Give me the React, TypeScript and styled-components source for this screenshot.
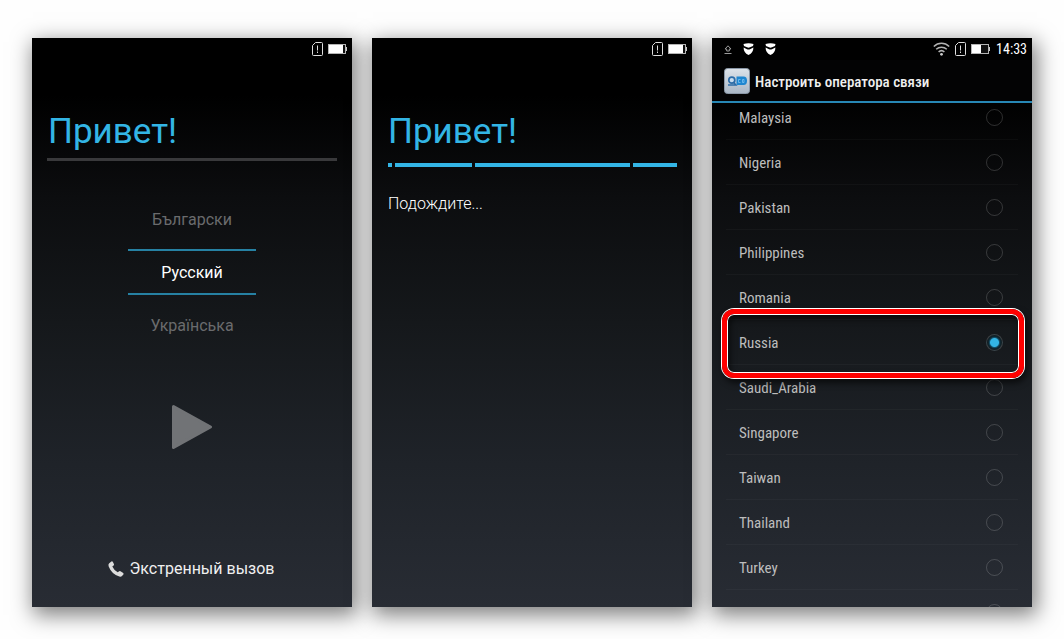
import React from "react";
import styled, { createGlobalStyle } from "styled-components";

const GlobalStyle = createGlobalStyle`
  *, *::before, *::after { box-sizing: border-box; }
  body { margin: 0; background: #fefefe; font-family: Roboto, "Liberation Sans", sans-serif; }
  button { font: inherit; color: inherit; background: none; border: 0; padding: 0; cursor: pointer; }
`;

const Page = styled.main`
  display: grid;
  grid-template-columns: repeat(3, minmax(0, 1fr));
  gap: 20px;
  padding: 38px 32px 32px;
  overflow: hidden;
`;

const Phone = styled.section`
  display: flex;
  flex-direction: column;
  aspect-ratio: 320 / 569;
  min-height: 0;
  overflow: hidden;
  color: #fff;
  background: linear-gradient(#000 0%, #000 10%, #0c0d0f 28%, #15181b 50%, #1f2329 75%, #282c34 100%);
  box-shadow: 3px 6px 20px 2px rgba(0, 0, 0, 0.5);
`;

const StatusBar = styled.header`
  display: flex;
  flex: none;
  align-items: center;
  justify-content: space-between;
  height: 22px;
  padding: 0 5px 0 12px;
  background: #000;
`;

const StatusGroup = styled.div<{ $gap: number }>`
  display: flex;
  align-items: center;
  gap: ${(p) => p.$gap}px;
  svg { display: block; }
`;

const Clock = styled.time`
  padding-left: 1px;
  font: 400 14px/22px "Roboto Condensed", "Liberation Sans Narrow", Roboto, sans-serif;
`;

const Setup = styled.div`
  display: flex;
  flex: 1;
  flex-direction: column;
  padding: 50px 15px 20px;
`;

const Greeting = styled.h1`
  margin: 0;
  padding-left: 1px;
  font-size: 35px;
  font-weight: 400;
  line-height: 44px;
  color: #33b5e5;
`;

const Rule = styled.div`
  height: 3px;
  margin-top: 4px;
  background: #39393b;
`;

const Progress = styled.div`
  display: grid;
  grid-template-columns: 4fr 77fr 155fr 44fr;
  gap: 3px;
  margin-top: 9px;
  padding-left: 1px;
  span { height: 4px; background: #33b5e5; }
`;

const Note = styled.p`
  margin: 27px 0 0;
  padding-left: 1px;
  font-size: 16px;
  font-weight: 300;
  line-height: 20px;
`;

const Wheel = styled.div`
  display: flex;
  flex-direction: column;
  align-items: center;
  gap: 10px;
  margin-top: 38px;
`;

const Language = styled.button<{ $selected?: boolean }>`
  width: 128px;
  height: ${(p) => (p.$selected ? 46 : 40)}px;
  padding-top: 2px;
  font-size: 16px;
  line-height: 20px;
  color: ${(p) => (p.$selected ? "#fff" : "#6a6b6d")};
  ${(p) => p.$selected && "border-top: 2px solid #2681a3; border-bottom: 2px solid #2681a3;"}
`;

const Play = styled.button`
  align-self: center;
  margin-top: 60px;
  svg { display: block; }
`;

const Emergency = styled.button`
  display: flex;
  align-items: center;
  align-self: center;
  gap: 6px;
  margin-top: auto;
  padding-right: 2px;
  font-size: 16px;
  line-height: 36px;
  color: #f0f0f0;
`;

const TitleBar = styled.div`
  display: flex;
  position: relative;
  z-index: 1;
  flex: none;
  align-items: center;
  gap: 5px;
  height: 43px;
  padding: 0 12px;
  border-bottom: 2px solid #2787b4;
  background: #030304;
  svg { display: block; flex: none; }
`;

const Title = styled.h2`
  margin: 0;
  padding-top: 2px;
  font: 500 15px/20px "Roboto Condensed", "Liberation Sans Narrow", Roboto, sans-serif;
  color: #f0f0f0;
  white-space: nowrap;
`;

const Countries = styled.ul`
  flex: 1;
  min-height: 0;
  margin: -8px 0 0;
  padding: 0 14px;
  list-style: none;
`;

const Country = styled.li`
  position: relative;
  border-bottom: 1px solid rgba(255, 255, 255, 0.03);
`;

const CountryLabel = styled.label`
  display: flex;
  align-items: center;
  justify-content: space-between;
  height: 44px;
  padding: 0 15px 0 13px;
  font: 400 15px/20px "Roboto Condensed", "Liberation Sans Narrow", Roboto, sans-serif;
  color: #bdbdbd;
  span { padding-top: 2px; }
`;

const Radio = styled.input`
  appearance: none;
  width: 17px;
  height: 17px;
  margin: 0;
  border: 1px solid rgba(255, 255, 255, 0.17);
  border-radius: 50%;
  &:checked {
    background: radial-gradient(circle, #33b5e5 0 4px, #145069 5px, #0e2630 6px, #15191c 8px);
  }
`;

const Highlight = styled.div`
  position: absolute;
  z-index: 1;
  inset: -11px -6px -14px -4px;
  border: 5px solid #fe0000;
  border-radius: 12px;
  box-shadow: 0 0 0 1px #fff, inset 0 0 0 1px #fff, 2px 4px 6px 1px rgba(0, 0, 0, 0.6),
    inset 2px 4px 6px 1px rgba(0, 0, 0, 0.6);
  pointer-events: none;
`;

const SimIcon = () => (
  <svg width="11" height="14" viewBox="0 0 11 14" fill="none" stroke="#ddd" aria-hidden="true">
    <path d="M3.500 .5h6a1 1 0 0 1 1 1v11a1 1 0 0 1-1 1h-8a1 1 0 0 1-1-1v-9z" />
    <path d="M5.500 3.500v5M5.500 9.500v1.500" />
  </svg>
);

const BatteryIcon = ({ level }: { level: number }) => (
  <svg width="19" height="10" viewBox="0 0 19 10" aria-hidden="true">
    <rect x=".5" y=".5" width="17" height="9" fill="#111" stroke="#b4b4b4" />
    <rect x="1" y="1" width={level} height="8" fill="#fff" />
    <path d="M18 3h1v4h-1z" fill="#ccc" />
  </svg>
);

const WifiIcon = () => (
  <svg width="17" height="14" viewBox="0 0 17 14" fill="none" stroke="#b4b4b4" strokeWidth="1.5" aria-hidden="true">
    <path d="M.8 4.500C5.200.2 11.800.2 16.200 4.500M3.200 7.300c3-2.800 7.600-2.800 10.600 0M5.600 9.900c1.700-1.500 4.100-1.500 5.800 0" />
    <circle cx="8.500" cy="12.300" r="1.400" fill="#ccc" stroke="none" />
  </svg>
);

const UploadIcon = () => (
  <svg width="8" height="9" viewBox="0 0 8 9" fill="none" stroke="#9a9a9a" aria-hidden="true">
    <path d="M4 .8 1 4h1.700v2h2.600V4H7zM.5 8.500h7" />
  </svg>
);

const MaskIcon = () => (
  <svg width="11" height="12" viewBox="0 0 11 12" aria-hidden="true">
    <path d="M.5 1Q5.500-.5 10.500 1L10 3 7 4.300Q5.500 5 4 4.300L1 3z" fill="#fff" />
    <path d="M.6 4.400 4 6.200Q5.500 6.900 7 6.200L10.400 4.400Q10.500 9.500 5.500 12 .5 9.500 .6 4.400z" fill="#fff" />
  </svg>
);

const AppIcon = () => (
  <svg width="26" height="26" viewBox="0 0 26 26" aria-hidden="true">
    <defs>
      <linearGradient id="tile" x2="0" y2="1">
        <stop stopColor="#dde3ea" />
        <stop offset="1" stopColor="#a9b6c5" />
      </linearGradient>
    </defs>
    <rect x=".5" y=".5" width="25" height="25" rx="3" fill="url(#tile)" stroke="#8b98a8" />
    <path d="M12.500 8.500h7a3.500 4.200 0 0 1 0 8.500h-7z" fill="#1f86d0" />
    <circle cx="7.800" cy="12.200" r="3" fill="#c7dcef" stroke="#2c6ca8" strokeWidth="1.700" />
    <path d="M4 17h8L9.300 14" fill="none" stroke="#2c6ca8" strokeWidth="1.400" />
    <path d="M14.500 11.500v3M14.500 11.500h2M14.500 14.500h2M18.500 11.500h1.500v3h-1.500z" fill="none" stroke="#7cc3f2" strokeWidth=".8" />
  </svg>
);

const PlayIcon = () => (
  <svg width="42" height="44" viewBox="0 0 42 44" aria-hidden="true">
    <path d="M2.500 1.500 39.500 22 2.500 42.500z" fill="#717376" stroke="#717376" strokeWidth="3" strokeLinejoin="round" />
  </svg>
);

const PhoneIcon = () => (
  <svg width="16" height="16" viewBox="0 0 16 16" aria-hidden="true">
    <path d="M1.200 2.200 3.400.5Q4.200.1 4.800.8L6 3.300Q6.200 4 5.600 4.500L4.300 5.500Q5.800 9 9.700 11.300L11.200 10.300Q11.800 9.900 12.500 10.300L15.200 12Q15.900 12.600 15.400 13.400L14 15Q13 16 11.300 15.500 3.500 13 .6 5.200 0 3.400 1.200 2.200z" fill="#dcdcdc" />
  </svg>
);

const countries = [
  "Malaysia", "Nigeria", "Pakistan", "Philippines", "Romania", "Russia",
  "Saudi_Arabia", "Singapore", "Taiwan", "Thailand", "Turkey", "Ukraine",
];

const SetupStatus = () => (
  <StatusBar>
    <span />
    <StatusGroup $gap={5}>
      <SimIcon />
      <BatteryIcon level={14} />
    </StatusGroup>
  </StatusBar>
);

export default function App() {
  return (
    <>
      <GlobalStyle />
      <Page>
        <Phone>
          <SetupStatus />
          <Setup>
            <Greeting>Привет!</Greeting>
            <Rule />
            <Wheel>
              <Language>Български</Language>
              <Language $selected aria-pressed="true">Русский</Language>
              <Language>Українська</Language>
            </Wheel>
            <Play aria-label="Далее"><PlayIcon /></Play>
            <Emergency><PhoneIcon />Экстренный вызов</Emergency>
          </Setup>
        </Phone>

        <Phone>
          <SetupStatus />
          <Setup>
            <Greeting>Привет!</Greeting>
            <Progress><span /><span /><span /><span /></Progress>
            <Note>Подождите...</Note>
          </Setup>
        </Phone>

        <Phone>
          <StatusBar>
            <StatusGroup $gap={11}>
              <UploadIcon />
              <MaskIcon />
              <MaskIcon />
            </StatusGroup>
            <StatusGroup $gap={5}>
              <WifiIcon />
              <SimIcon />
              <BatteryIcon level={9} />
              <Clock>14:33</Clock>
            </StatusGroup>
          </StatusBar>
          <TitleBar>
            <AppIcon />
            <Title>Настроить оператора связи</Title>
          </TitleBar>
          <Countries>
            {countries.map((name) => (
              <Country key={name}>
                <CountryLabel>
                  <span>{name}</span>
                  <Radio type="radio" name="country" value={name} defaultChecked={name === "Russia"} />
                </CountryLabel>
                {name === "Russia" && <Highlight />}
              </Country>
            ))}
          </Countries>
        </Phone>
      </Page>
    </>
  );
}
